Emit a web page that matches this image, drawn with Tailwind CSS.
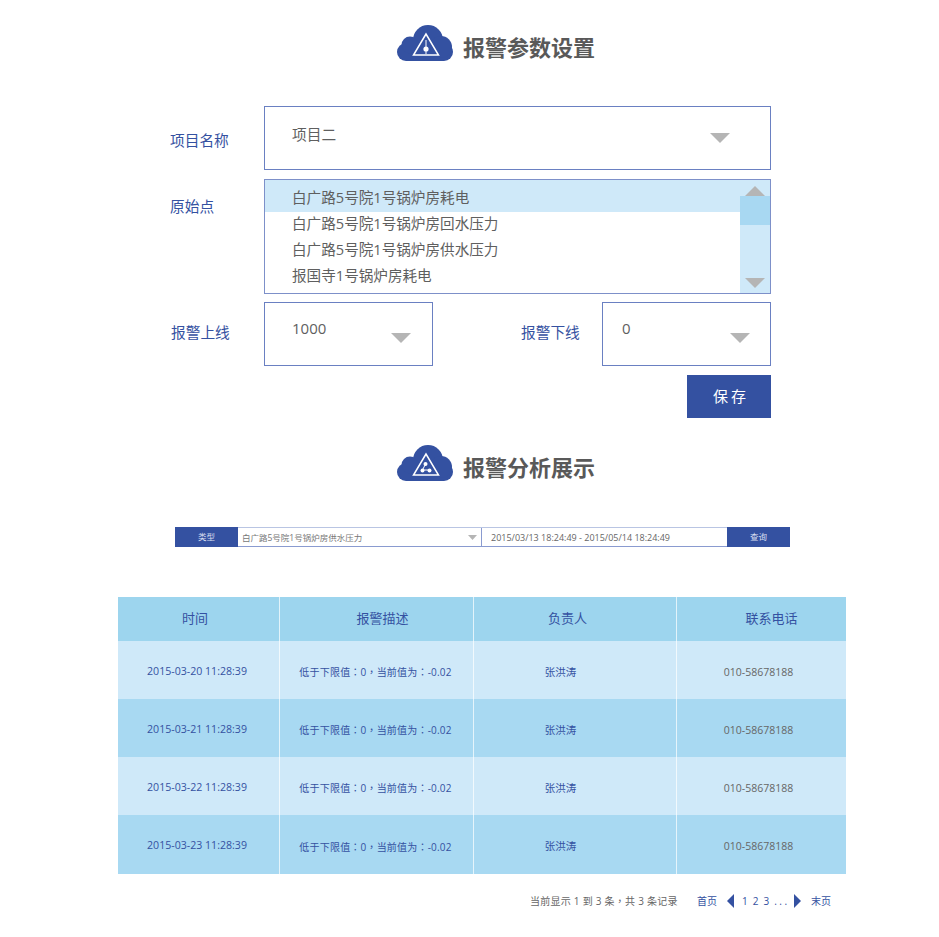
<!DOCTYPE html>
<html lang="zh-CN">
<head>
  <meta charset="utf-8">
  <title>报警参数设置</title>
  <script src="https://cdn.jsdelivr.net/npm/@tailwindcss/browser@4"></script>
</head>
<body class="bg-white font-['Open_Sans','Noto_Sans_CJK_SC',sans-serif] text-[#5f5f5f]">
  <div class="w-[939px] h-[937px] overflow-hidden pt-[25px]">

    <!-- title 1 -->
    <div class="flex items-center h-[37px] pl-[397px]">
      <svg width="56" height="37" viewBox="0 0 56 37">
        <g fill="#3451a1">
          <rect x="0" y="18" width="56" height="18" rx="9"/>
          <circle cx="31" cy="15" r="15"/>
          <circle cx="13" cy="20" r="8.5"/>
          <circle cx="44" cy="22" r="11"/>
        </g>
        <path d="M29 9 L16.5 30 H41.5 Z" fill="none" stroke="#fff" stroke-width="1.5"/>
        <path d="M29 15 V29" stroke="#fff" stroke-width="1"/>
        <circle cx="29" cy="24" r="2.6" fill="#fff"/>
      </svg>
      <h1 class="ml-[10px] text-[22px] leading-[37px] font-bold text-[#595959] translate-y-[4px]">报警参数设置</h1>
    </div>

    <!-- form -->
    <div class="ml-[170px] w-[601px] mt-[44px]">
      <div class="flex">
        <div class="w-[94px] pt-[23px] text-[14.7px] leading-[22px] text-[#3451a1]">项目名称</div>
        <div class="w-[507px] h-[64px] border border-[#6a80c2] pl-[27px] pr-[40px] flex justify-between items-start">
          <span class="mt-[16px] text-[14.7px] leading-[22px]">项目二</span>
          <svg class="mt-[26px]" width="20" height="10" viewBox="0 0 20 10"><path d="M0 0H20L10 10Z" fill="#b5b5b5"/></svg>
        </div>
      </div>

      <div class="flex mt-[9px]">
        <div class="w-[94px] pt-[16px] text-[14.7px] leading-[22px] text-[#3451a1]">原始点</div>
        <div class="w-[507px] h-[115px] border border-[#7d90c9] flex">
          <ul class="flex-1 text-[14.6px]">
            <li class="h-[32px] pl-[27px] pt-[4px] leading-[26px] bg-[#cfe9f9]">白广路5号院1号锅炉房耗电</li>
            <li class="h-[26px] pl-[27px] leading-[22px]">白广路5号院1号锅炉房回水压力</li>
            <li class="h-[26px] pl-[27px] leading-[22px]">白广路5号院1号锅炉房供水压力</li>
            <li class="h-[26px] pl-[27px] leading-[22px]">报国寺1号锅炉房耗电</li>
          </ul>
          <div class="w-[30px] bg-[#cfe9f9] flex flex-col items-center">
            <svg class="mt-[6px]" width="20" height="10" viewBox="0 0 20 10"><path d="M0 10H20L10 0Z" fill="#b5b5b5"/></svg>
            <div class="w-full h-[29px] bg-[#a8d8f2]"></div>
            <svg class="mt-[53px]" width="20" height="10" viewBox="0 0 20 10"><path d="M0 0H20L10 10Z" fill="#b5b5b5"/></svg>
          </div>
        </div>
      </div>

      <div class="flex mt-[8px]">
        <div class="w-[94px] pt-[19px] pl-[1px] text-[14.7px] leading-[22px] text-[#3451a1]">报警上线</div>
        <div class="w-[169px] h-[64px] border border-[#6a80c2] pl-[27px] pr-[21px] flex justify-between items-start">
          <span class="mt-[14px] text-[15px] leading-[22px]">1000</span>
          <svg class="mt-[30px]" width="20" height="10" viewBox="0 0 20 10"><path d="M0 0H20L10 10Z" fill="#b5b5b5"/></svg>
        </div>
        <div class="w-[169px] pl-[88px] pt-[19px] text-[14.7px] leading-[22px] text-[#3451a1] whitespace-nowrap">报警下线</div>
        <div class="w-[169px] h-[64px] border border-[#6a80c2] pl-[19px] pr-[20px] flex justify-between items-start">
          <span class="mt-[14px] text-[15px] leading-[22px]">0</span>
          <svg class="mt-[30px]" width="20" height="10" viewBox="0 0 20 10"><path d="M0 0H20L10 10Z" fill="#b5b5b5"/></svg>
        </div>
      </div>

      <div class="flex justify-end mt-[9px]">
        <button class="w-[84px] h-[43px] pl-[4px] bg-[#3451a1] text-white text-[15px] tracking-[3px]">保存</button>
      </div>
    </div>

    <!-- title 2 -->
    <div class="flex items-center h-[37px] pl-[397px] mt-[27px]">
      <svg width="56" height="37" viewBox="0 0 56 37">
        <g fill="#3451a1">
          <rect x="0" y="18" width="56" height="18" rx="9"/>
          <circle cx="31" cy="15" r="15"/>
          <circle cx="13" cy="20" r="8.5"/>
          <circle cx="44" cy="22" r="11"/>
        </g>
        <path d="M29 9 L16.5 30 H41.5 Z" fill="none" stroke="#fff" stroke-width="1.5"/>
        <path d="M28.5 19 L25.5 25 H33" fill="none" stroke="#fff" stroke-width="1"/>
        <circle cx="28.5" cy="19" r="2" fill="#fff"/>
        <circle cx="25.5" cy="25.5" r="2" fill="#fff"/>
        <circle cx="32.5" cy="25.5" r="2" fill="#fff"/>
      </svg>
      <h2 class="ml-[10px] text-[22px] leading-[37px] font-bold text-[#595959] translate-y-[4px]">报警分析展示</h2>
    </div>

    <!-- filter bar -->
    <div class="ml-[175px] mt-[45px] w-[615px] h-[20px] flex text-[8.5px] leading-[19px] border-t border-[#b9c5e3]">
      <div class="w-[63px] h-[20px] -mt-[1px] bg-[#3451a1] text-[#d7def0] text-center leading-[20px]">类型</div>
      <div class="w-[244px] border-r border-b border-[#8a9bd0] pl-[4px] pr-[4px] flex justify-between items-center text-[#777]">
        <span>白广路5号院1号锅炉房供水压力</span>
        <svg width="9" height="5" viewBox="0 0 9 5"><path d="M0 0H9L4.5 5Z" fill="#b5b5b5"/></svg>
      </div>
      <div class="w-[245px] border-b border-[#8a9bd0] pl-[9px] text-[9px] text-[#666]">2015/03/13 18:24:49 - 2015/05/14 18:24:49</div>
      <div class="w-[63px] h-[20px] -mt-[1px] bg-[#3451a1] text-[#d7def0] text-center leading-[20px]">查询</div>
    </div>

    <!-- table -->
    <div class="ml-[118px] mt-[50px] w-[728px] grid grid-cols-[162px_194px_203px_169px] text-[#3451a1]">
      <div class="h-[44px] bg-[#9dd5ee] border-r border-white/70 flex items-center justify-center pr-[7px] pb-[1px] text-[13px]">时间</div>
      <div class="h-[44px] bg-[#9dd5ee] border-r border-white/70 flex items-center justify-center pl-[12px] pb-[1px] text-[13px]">报警描述</div>
      <div class="h-[44px] bg-[#9dd5ee] border-r border-white/70 flex items-center justify-center pr-[15px] pb-[1px] text-[13px]">负责人</div>
      <div class="h-[44px] bg-[#9dd5ee] flex items-center justify-center pl-[20px] pb-[1px] text-[13px]">联系电话</div>

      <div class="h-[58px] bg-[#cfe9f9] border-r border-white/70 flex items-center justify-center pr-[3px] pt-[4px] text-[10.6px]">2015-03-20 11:28:39</div>
      <div lang="zh-TW" class="h-[58px] bg-[#cfe9f9] border-r border-white/70 flex items-center justify-center pr-[2px] pt-[5px] text-[10px] tracking-[0.2px] font-['Open_Sans','Noto_Sans_CJK_TC',sans-serif]">低于下限值：0，当前值为：-0.02</div>
      <div class="h-[58px] bg-[#cfe9f9] border-r border-white/70 flex items-center justify-center pr-[29px] pt-[5px] text-[10.5px]">张洪涛</div>
      <div class="h-[58px] bg-[#cfe9f9] flex items-center justify-center pr-[6px] pt-[5px] text-[10.5px] text-[#666]">010-58678188</div>

      <div class="h-[58px] bg-[#a8d9f2] border-r border-white/70 flex items-center justify-center pr-[3px] pt-[4px] text-[10.6px]">2015-03-21 11:28:39</div>
      <div lang="zh-TW" class="h-[58px] bg-[#a8d9f2] border-r border-white/70 flex items-center justify-center pr-[2px] pt-[5px] text-[10px] tracking-[0.2px] font-['Open_Sans','Noto_Sans_CJK_TC',sans-serif]">低于下限值：0，当前值为：-0.02</div>
      <div class="h-[58px] bg-[#a8d9f2] border-r border-white/70 flex items-center justify-center pr-[29px] pt-[5px] text-[10.5px]">张洪涛</div>
      <div class="h-[58px] bg-[#a8d9f2] flex items-center justify-center pr-[6px] pt-[5px] text-[10.5px] text-[#666]">010-58678188</div>

      <div class="h-[58px] bg-[#cfe9f9] border-r border-white/70 flex items-center justify-center pr-[3px] pt-[4px] text-[10.6px]">2015-03-22 11:28:39</div>
      <div lang="zh-TW" class="h-[58px] bg-[#cfe9f9] border-r border-white/70 flex items-center justify-center pr-[2px] pt-[5px] text-[10px] tracking-[0.2px] font-['Open_Sans','Noto_Sans_CJK_TC',sans-serif]">低于下限值：0，当前值为：-0.02</div>
      <div class="h-[58px] bg-[#cfe9f9] border-r border-white/70 flex items-center justify-center pr-[29px] pt-[5px] text-[10.5px]">张洪涛</div>
      <div class="h-[58px] bg-[#cfe9f9] flex items-center justify-center pr-[6px] pt-[5px] text-[10.5px] text-[#666]">010-58678188</div>

      <div class="h-[59px] bg-[#a8d9f2] border-r border-white/70 flex items-center justify-center pr-[3px] pt-[3px] text-[10.6px]">2015-03-23 11:28:39</div>
      <div lang="zh-TW" class="h-[59px] bg-[#a8d9f2] border-r border-white/70 flex items-center justify-center pr-[2px] pt-[5px] text-[10px] tracking-[0.2px] font-['Open_Sans','Noto_Sans_CJK_TC',sans-serif]">低于下限值：0，当前值为：-0.02</div>
      <div class="h-[59px] bg-[#a8d9f2] border-r border-white/70 flex items-center justify-center pr-[29px] pt-[5px] text-[10.5px]">张洪涛</div>
      <div class="h-[59px] bg-[#a8d9f2] flex items-center justify-center pr-[6px] pt-[5px] text-[10.5px] text-[#666]">010-58678188</div>
    </div>

    <!-- pagination -->
    <div class="ml-[530px] mt-[20px] flex items-center h-[14px] text-[10px] leading-[14px] whitespace-nowrap text-[#3451a1]">
      <span lang="zh-TW" class="w-[167px] text-[#666] tracking-[0.25px] font-['Open_Sans','Noto_Sans_CJK_TC',sans-serif]">当前显示 1 到 3 条，共 3 条记录</span>
      <span class="w-[30px]">首页</span>
      <svg width="7" height="14" viewBox="0 0 7 14"><path d="M7 0V14L0 7Z" fill="#3451a1"/></svg>
      <span class="ml-[8px] w-[52px] tracking-[1.2px]">1 2 3 <span class="tracking-[2.5px]">...</span></span>
      <svg width="7" height="14" viewBox="0 0 7 14"><path d="M0 0V14L7 7Z" fill="#3451a1"/></svg>
      <span class="ml-[10px]">末页</span>
    </div>
  </div>
</body>
</html>
